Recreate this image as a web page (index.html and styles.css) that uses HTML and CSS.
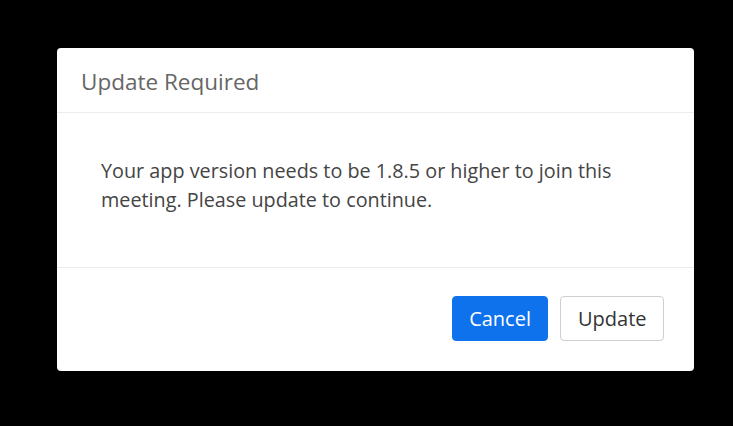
FILE: index.html
```html
<!DOCTYPE html>
<html lang="en">
<head>
    <meta charset="UTF-8">
    <meta name="viewport" content="width=device-width, initial-scale=1.0">
    <title>Update Required</title>
    <link rel="stylesheet" href="styles.css">
</head>
<body>

    <div class="dialog">
        <div class="dialog-header">Update Required</div>
        <div class="dialog-body">
            Your app version needs to be 1.8.5 or higher to join this meeting. Please update to continue.
        </div>
        <div class="dialog-footer">
            <button class="btn btn-primary">Cancel</button>
            <button class="btn btn-default">Update</button>
        </div>
    </div>

</body>
</html>
```

FILE: styles.css
```css
body {
    margin: 0;
    background-color: #000;
    font-family: "Open Sans", "Liberation Sans", sans-serif;
    height: 100vh;
    overflow: hidden;
}
.dialog {
    width: 637px;
    margin: 48px 0 0 57px;
    background-color: #fff;
    border-radius: 4px;
}
.dialog-header {
    height: 65px;
    box-sizing: border-box;
    padding: 18px 24px 0;
    font-size: 22.5px;
    color: #666;
    border-bottom: 1px solid #ececec;
}
.dialog-body {
    height: 155px;
    box-sizing: border-box;
    padding: 43px 44px 0;
    font-size: 19.8px;
    line-height: 29px;
    color: #444;
    border-bottom: 1px solid #ececec;
}
.dialog-footer {
    display: flex;
    justify-content: flex-end;
    gap: 12px;
    padding: 28px 30px 30px;
}
.btn {
    height: 45px;
    padding: 0 16.5px;
    border-radius: 4px;
    font-family: inherit;
    font-size: 20px;
    cursor: pointer;
}
.btn-primary {
    background-color: #0e72ed;
    border: 1px solid #0e72ed;
    color: #fff;
}
.btn-default {
    background-color: #fff;
    border: 1px solid #cfcfcf;
    color: #333;
}
```
